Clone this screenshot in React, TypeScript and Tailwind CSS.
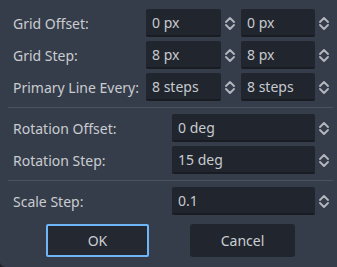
import type { ReactNode } from "react";

const font = { fontFamily: '"Noto Sans", "Open Sans", sans-serif' };

function Arrows() {
  return (
    <svg width="10" height="15" viewBox="0 0 10 15" className="shrink-0">
      <path d="M1 6 L5 2 L9 6 M1 9 L5 13 L9 9" fill="none" stroke="#b3b7be" strokeWidth="1.8" strokeLinecap="round" strokeLinejoin="round" />
    </svg>
  );
}

function SpinBox({ value, width }: { value: string; width: string }) {
  return (
    <div className="flex items-center">
      <div className={`${width} h-[28px] flex items-center pl-[6px] bg-[#21262e] border-b-2 border-[#191c22] rounded-[2px] text-[#c7cace]`}>
        {value}
      </div>
      <div className="ml-[4px]">
        <Arrows />
      </div>
    </div>
  );
}

function Row({ label, labelWidth, children }: { label: string; labelWidth: string; children: ReactNode }) {
  return (
    <div className="flex items-center h-[28px]">
      <div className={`${labelWidth} pl-[5px] whitespace-nowrap text-[#c9ccd1]`}>{label}</div>
      {children}
    </div>
  );
}

function Separator() {
  return <div className="h-px bg-[#4b5261] my-[6px] mr-[-4px]" />;
}

export default function App() {
  return (
    <div className="w-[337px] h-[267px] bg-[#1c2028]" style={font}>
      <div className="w-full h-full bg-[#363d4a] rounded-bl-[5px] text-[14px] pt-[9px] px-2">
        <div className="flex flex-col gap-[4px]">
          <Row label="Grid Offset:" labelWidth="w-[139px]">
            <SpinBox value="0 px" width="w-[75px]" />
            <div className="ml-[6px]">
              <SpinBox value="0 px" width="w-[74px]" />
            </div>
          </Row>
          <Row label="Grid Step:" labelWidth="w-[139px]">
            <SpinBox value="8 px" width="w-[75px]" />
            <div className="ml-[6px]">
              <SpinBox value="8 px" width="w-[74px]" />
            </div>
          </Row>
          <Row label="Primary Line Every:" labelWidth="w-[139px]">
            <SpinBox value="8 steps" width="w-[75px]" />
            <div className="ml-[6px]">
              <SpinBox value="8 steps" width="w-[74px]" />
            </div>
          </Row>
        </div>
        <Separator />
        <div className="flex flex-col gap-[4px]">
          <Row label="Rotation Offset:" labelWidth="w-[165px]">
            <SpinBox value="0 deg" width="w-[143px]" />
          </Row>
          <Row label="Rotation Step:" labelWidth="w-[165px]">
            <SpinBox value="15 deg" width="w-[143px]" />
          </Row>
        </div>
        <Separator />
        <Row label="Scale Step:" labelWidth="w-[165px]">
          <SpinBox value="0.1" width="w-[143px]" />
        </Row>
        <div className="flex mt-[9px] pl-[38px] gap-[41px] text-[#cbced3]">
          <button className="w-[103px] h-[33px] bg-[#232831] border-2 border-[#6fb6f7] rounded-[2px]">OK</button>
          <button className="w-[105px] h-[33px] bg-[#21262e] rounded-[3px]">Cancel</button>
        </div>
      </div>
    </div>
  );
}
